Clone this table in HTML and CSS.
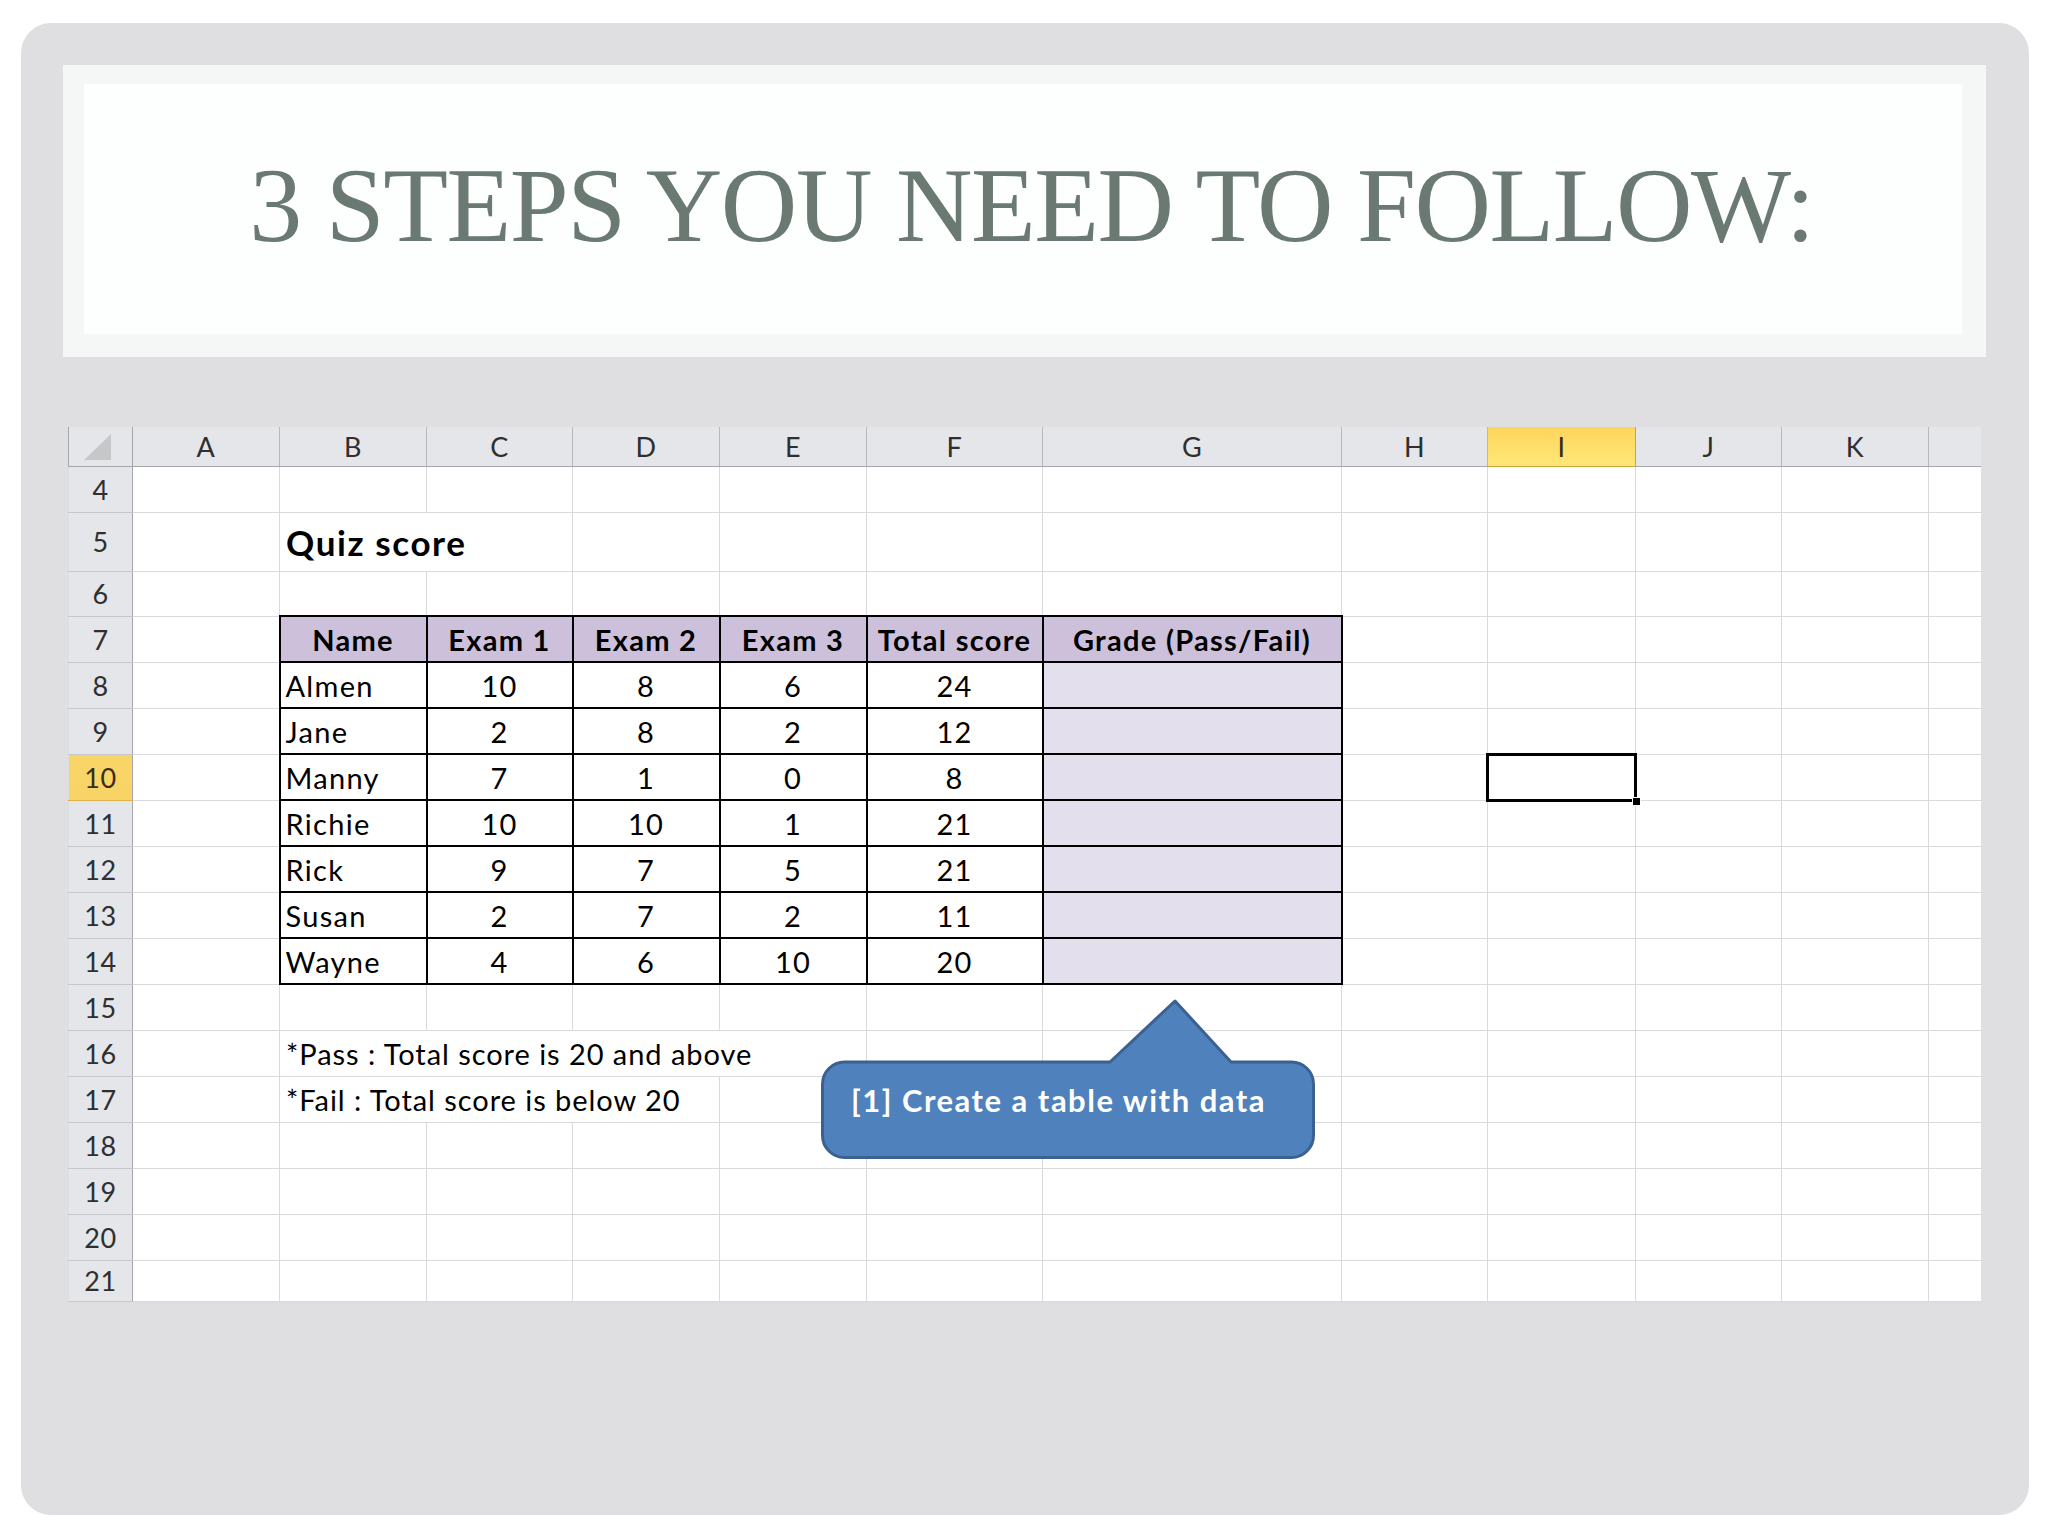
FILE: index.html
```html
<!DOCTYPE html>
<html>
<head>
<meta charset="utf-8">
<title>3 Steps You Need To Follow</title>
<link rel="stylesheet" href="styles.css">
</head>
<body>
<div class="slide">
  <div class="title-frame">
    <div class="title-box">
      <h1 class="title">3 STEPS YOU NEED TO FOLLOW:</h1>
    </div>
  </div>

  <div class="sheet-wrap">
    <table class="sheet">
      <colgroup>
        <col class="w-rh"><col class="w-147"><col class="w-147"><col class="w-146"><col class="w-147"><col class="w-147"><col class="w-176"><col class="w-299"><col class="w-146"><col class="w-148"><col class="w-146"><col class="w-147"><col class="w-52">
      </colgroup>
      <thead>
        <tr class="r-head">
          <th class="corner"><span class="tri"></span></th>
          <th class="ch">A</th><th class="ch">B</th><th class="ch">C</th><th class="ch">D</th><th class="ch">E</th><th class="ch">F</th><th class="ch">G</th><th class="ch">H</th><th class="ch ch-hl">I</th><th class="ch">J</th><th class="ch">K</th><th class="ch last"></th>
        </tr>
      </thead>
      <tbody>
        <tr><th class="rh">4</th><td></td><td></td><td></td><td></td><td></td><td></td><td></td><td></td><td></td><td></td><td></td><td class="last"></td></tr>
        <tr class="r5"><th class="rh">5</th><td></td><td colspan="2" class="quiz">Quiz score</td><td></td><td></td><td></td><td></td><td></td><td></td><td></td><td></td><td class="last"></td></tr>
        <tr class="r6"><th class="rh">6</th><td></td><td></td><td></td><td></td><td></td><td></td><td></td><td></td><td></td><td></td><td></td><td class="last"></td></tr>
        <tr><th class="rh">7</th><td></td><td class="t th">Name</td><td class="t th">Exam 1</td><td class="t th">Exam 2</td><td class="t th">Exam 3</td><td class="t th">Total score</td><td class="t th">Grade (Pass/Fail)</td><td></td><td></td><td></td><td></td><td class="last"></td></tr>
        <tr><th class="rh">8</th><td></td><td class="t name">Almen</td><td class="t num">10</td><td class="t num">8</td><td class="t num">6</td><td class="t num">24</td><td class="t grade"></td><td></td><td></td><td></td><td></td><td class="last"></td></tr>
        <tr><th class="rh">9</th><td></td><td class="t name">Jane</td><td class="t num">2</td><td class="t num">8</td><td class="t num">2</td><td class="t num">12</td><td class="t grade"></td><td></td><td></td><td></td><td></td><td class="last"></td></tr>
        <tr><th class="rh rh-hl">10</th><td></td><td class="t name">Manny</td><td class="t num">7</td><td class="t num">1</td><td class="t num">0</td><td class="t num">8</td><td class="t grade"></td><td></td><td class="sel"></td><td></td><td></td><td class="last"></td></tr>
        <tr><th class="rh">11</th><td></td><td class="t name">Richie</td><td class="t num">10</td><td class="t num">10</td><td class="t num">1</td><td class="t num">21</td><td class="t grade"></td><td></td><td></td><td></td><td></td><td class="last"></td></tr>
        <tr><th class="rh">12</th><td></td><td class="t name">Rick</td><td class="t num">9</td><td class="t num">7</td><td class="t num">5</td><td class="t num">21</td><td class="t grade"></td><td></td><td></td><td></td><td></td><td class="last"></td></tr>
        <tr><th class="rh">13</th><td></td><td class="t name">Susan</td><td class="t num">2</td><td class="t num">7</td><td class="t num">2</td><td class="t num">11</td><td class="t grade"></td><td></td><td></td><td></td><td></td><td class="last"></td></tr>
        <tr><th class="rh">14</th><td></td><td class="t name">Wayne</td><td class="t num">4</td><td class="t num">6</td><td class="t num">10</td><td class="t num">20</td><td class="t grade"></td><td></td><td></td><td></td><td></td><td class="last"></td></tr>
        <tr><th class="rh">15</th><td></td><td></td><td></td><td></td><td></td><td></td><td></td><td></td><td></td><td></td><td></td><td class="last"></td></tr>
        <tr><th class="rh">16</th><td></td><td colspan="4" class="note">*Pass : Total score is 20 and above</td><td></td><td></td><td></td><td></td><td></td><td></td><td class="last"></td></tr>
        <tr><th class="rh">17</th><td></td><td colspan="3" class="note">*Fail : Total score is below 20</td><td></td><td></td><td></td><td></td><td></td><td></td><td></td><td class="last"></td></tr>
        <tr><th class="rh">18</th><td></td><td></td><td></td><td></td><td></td><td></td><td></td><td></td><td></td><td></td><td></td><td class="last"></td></tr>
        <tr><th class="rh">19</th><td></td><td></td><td></td><td></td><td></td><td></td><td></td><td></td><td></td><td></td><td></td><td class="last"></td></tr>
        <tr><th class="rh">20</th><td></td><td></td><td></td><td></td><td></td><td></td><td></td><td></td><td></td><td></td><td></td><td class="last"></td></tr>
        <tr class="r21"><th class="rh">21</th><td></td><td></td><td></td><td></td><td></td><td></td><td></td><td></td><td></td><td></td><td></td><td class="last"></td></tr>
      </tbody>
    </table>

    <div class="callout">
      <svg class="callout-shape" width="494" height="160" viewBox="0 0 494 160">
        <path d="M 23.5 63 H 289 L 354 2 L 410 63 H 470.5 A 22 22 0 0 1 492.5 85 V 136.5 A 22 22 0 0 1 470.5 158.5 H 23.5 A 22 22 0 0 1 1.5 136.5 V 85 A 22 22 0 0 1 23.5 63 Z" fill="#4f81bd" stroke="#3a6190" stroke-width="3" stroke-linejoin="round"/>
      </svg>
      <span class="callout-text">[1] Create a table with data</span>
    </div>
  </div>
</div>
</body>
</html>
```

FILE: styles.css
```css
html, body {
  margin: 0;
  padding: 0;
  background: #ffffff;
}

body {
  width: 2048px;
  height: 1536px;
  font-family: Lato, "Noto Sans", sans-serif;
  overflow: hidden;
}

.slide {
  margin: 23px 0 0 21px;
  width: 2008px;
  height: 1492px;
  box-sizing: border-box;
  padding: 42px 0 0 42px;
  border-radius: 30px;
  background: #dfdfe1;
}

/* ---------- title ---------- */
.title-frame {
  width: 1923px;
  height: 292px;
  box-sizing: border-box;
  padding: 19px 24px 23px 21px;
  background: #f5f6f6;
}

.title-box {
  height: 100%;
  box-sizing: border-box;
  padding: 0 0 6px 17px;
  background: #fdfefe;
  display: flex;
  align-items: center;
  justify-content: center;
}

.title {
  margin: 0;
  font-family: "Liberation Serif", "Times New Roman", serif;
  font-weight: normal;
  font-size: 106px;
  line-height: 1;
  letter-spacing: -1.5px;
  color: #6a7a73;
  white-space: nowrap;
}

/* ---------- spreadsheet ---------- */
.sheet-wrap {
  position: relative;
  width: 1912px;
  margin: 70px 0 0 5px;
}

.sheet {
  width: 1912px;
  table-layout: fixed;
  border-collapse: collapse;
  background: #ffffff;
  font-size: 29px;
  letter-spacing: 1.3px;
  color: #000;
}

.w-rh { width: 64px; }
.w-146 { width: 146px; }
.w-147 { width: 147px; }
.w-148 { width: 148px; }
.w-176 { width: 176px; }
.w-299 { width: 299px; }
.w-52 { width: 52px; }

.sheet tr { height: 46px; }
.sheet tr.r-head { height: 39px; }
.sheet tr.r5 { height: 59px; }
.sheet tr.r6 { height: 45px; }
.sheet tr.r21 { height: 41px; }

.sheet td {
  padding: 0 6px;
  border: 1px solid #d9dadc;
  vertical-align: middle;
  white-space: nowrap;
  overflow: visible;
}

.sheet td.last {
  border-right: none;
}

.sheet th {
  padding: 0;
  font-weight: normal;
  font-size: 27px;
  letter-spacing: 0.5px;
  color: #2f2f2f;
  text-align: center;
  vertical-align: middle;
  background: #e4e6e9;
}

.corner {
  border-left: 1px solid #a4a6a9;
  border-right: 1px solid #a4a6a9;
  border-bottom: 1px solid #a4a6a9;
  text-align: right;
  vertical-align: bottom !important;
  line-height: 0;
}

.tri {
  display: inline-block;
  width: 0;
  height: 0;
  margin: 0 7px 6px 0;
  border-left: 27px solid transparent;
  border-bottom: 26px solid #c6c7c9;
}

.ch {
  border-right: 1px solid #b7b9bc;
  border-bottom: 1px solid #a4a6a9;
}

.ch.last {
  border-right: none;
}

.ch-hl {
  background: linear-gradient(#fdd45c, #ffe877) !important;
  border-left: 1px solid #c9a241;
  border-right: 1px solid #c9a241;
  border-bottom: 1px solid #c9a241 !important;
  color: #3a2c10 !important;
}

.rh {
  border-right: 1px solid #a4a6a9;
  border-bottom: 1px solid #c6c8cb;
  border-left: 1px solid #dcdde0;
}

.rh-hl {
  background: linear-gradient(#f9d467, #f8d466) !important;
  border-top: 1px solid #e2b24a;
  border-bottom: 1px solid #e2b24a !important;
  color: #3a2c10 !important;
}

/* cell content */
.quiz {
  font-size: 35px;
  font-weight: 700;
  letter-spacing: 1.6px;
}

.sheet td.note {
  padding-left: 6px;
  letter-spacing: 0.95px;
}

.sheet td.t {
  border: 2px solid #000;
}

.sheet td.th {
  background: #ccc0da;
  font-weight: 700;
  text-align: center;
  padding: 0;
}

.sheet td.name {
  text-align: left;
  padding-left: 5px;
}

.sheet td.num {
  text-align: center;
}

.sheet td.grade {
  background: #e3dfec;
}

.sheet td.sel {
  position: relative;
}

.sheet td.sel::before {
  content: "";
  position: absolute;
  left: -2px;
  top: -2px;
  right: -2px;
  bottom: -2px;
  border: 3px solid #000;
}

.sheet td.sel::after {
  content: "";
  position: absolute;
  right: -6px;
  bottom: -6px;
  width: 7px;
  height: 7px;
  background: #000;
  border: 1px solid #fff;
}

/* ---------- callout ---------- */
.callout {
  position: absolute;
  left: 753px;
  top: 572px;
  width: 494px;
  height: 160px;
}

.callout-shape {
  position: absolute;
  left: 0;
  top: 0;
  display: block;
}

.callout-text {
  position: absolute;
  left: 30px;
  top: 83px;
  font-family: Lato, "Noto Sans", sans-serif;
  font-size: 31px;
  font-weight: 700;
  letter-spacing: 1.5px;
  line-height: 36px;
  color: #ffffff;
  white-space: nowrap;
}
```
